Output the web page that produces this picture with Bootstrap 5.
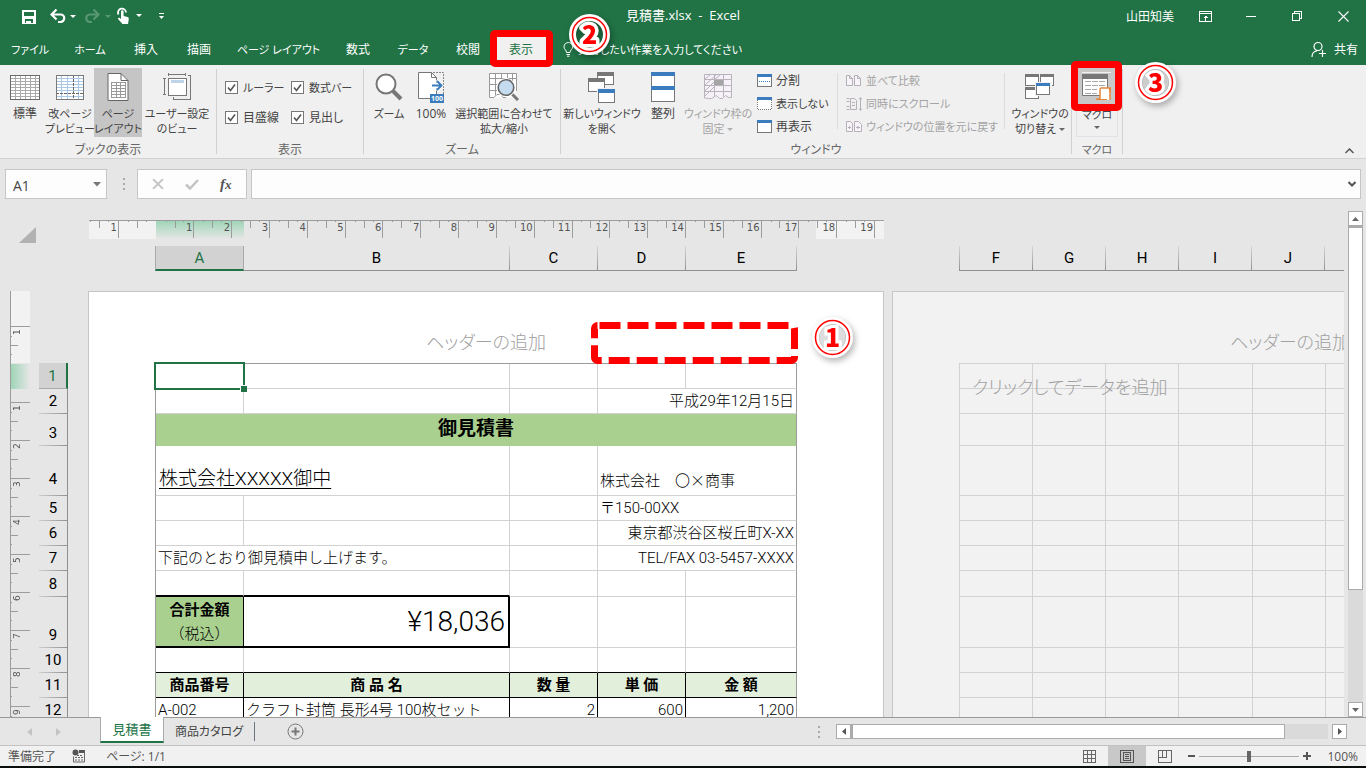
<!DOCTYPE html>
<html lang="ja">
<head>
<meta charset="utf-8">
<meta name="viewport" content="width=device-width, initial-scale=1">
<title>見積書.xlsx - Excel</title>
<link rel="stylesheet" href="https://cdn.jsdelivr.net/npm/bootstrap@5.3.0/dist/css/bootstrap.min.css">
<style>
:root{--xl:#217346;--ui:#f0f0f0;--bg:#e6e6e6;--ln:#d0d0d0}
html,body{height:100%}
body{font-family:"Open Sans","Noto Sans CJK JP",sans-serif;font-size:12px;line-height:15px;color:#333;background:var(--bg);font-feature-settings:"palt"}
button,input{font:inherit;color:inherit;font-feature-settings:inherit}
svg{display:block;flex:none}
.plain{border:0;background:none;padding:0}
.crisp{shape-rendering:crispEdges}
.f11{font-size:11px}
/* title and tabs */
.titlebar{height:32px}
.topband{background:var(--xl);color:#fff}
.titletext{top:8px;font-size:13px}
.tabrow{height:33px}
.rtab{height:33px;color:#fff;text-decoration:none;white-space:nowrap;padding-top:2px}
.rtab.on{background:var(--ui);color:var(--xl)}
.w52{width:52px}.w54{width:54px}.w56{width:56px}.w60{width:60px}.w105{width:105px}
.winbtn{width:46px;height:32px;display:grid;place-items:center}
.redbox{position:absolute;border:7px solid #f00;border-radius:5px;z-index:5;pointer-events:none}
.num{position:absolute;z-index:6;overflow:visible;filter:drop-shadow(2px 3px 3px rgba(0,0,0,.3))}
.num text{font:900 25px "Noto Sans CJK JP",sans-serif;text-anchor:middle}
/* ribbon */
.ribbon{height:94px;background:var(--ui);border-bottom:1px solid #d2d2d2;color:#444}
.grp{border-right:1px solid var(--ln);margin:4px 0}
.grp .cap{height:15px;text-align:center;color:#666}
.grp .tools{height:70px;margin-bottom:3px}
.rb{height:69px;margin-top:-1px;white-space:nowrap;display:flex;flex-direction:column;align-items:center;line-height:15px;flex:none}
.rb .ic{height:38px;display:flex;align-items:center}
.rb.on{background:#c5c5c5}
.dim{color:#a3a3a3}
.b40{width:40px}.b42{width:42px}.b48{width:48px}.b62{width:62px}.b70{width:70px}.b82{width:82px}.b104{width:104px}
.sm{height:23px;white-space:nowrap;display:flex;align-items:center;gap:4px}
.list1{width:84px}.list2{width:166px}
.vsep{width:1px;background:#dcdcdc;margin:4px 0 10px}
.xchk{appearance:none;width:13px;height:13px;border:1px solid #777;background:#fff;margin:0 1px 0 0;flex:none}
.xchk:checked{background:#fff url("data:image/svg+xml,%3Csvg xmlns='http://www.w3.org/2000/svg' viewBox='0 0 11 11'%3E%3Cpath d='M2 5.5l2.5 3L9 2.5' fill='none' stroke='%23555' stroke-width='1.6'/%3E%3C/svg%3E")}
.grp .chkgrid{display:grid;grid-template-columns:66px 72px;align-content:start;row-gap:15px;padding:11px 0 0 8px}
/* formula bar */
.fbar{height:54px;padding:10px 5px 12px}
.fbox{background:#fdfdfd;border:1px solid #c6c6c6;border-radius:0}
.namebox{width:102px}
.namebox input{width:70px;font-size:14px;background:none;border:0;padding:3px 0 0 7px;color:#444}
.fbox input:focus{outline:0}
.fxbox{width:110px}
.fxi{font:italic 700 15px "Liberation Serif",serif;color:#555}
/* sheet */
.panes{font-family:Roboto,"Noto Sans CJK JP",sans-serif;font-size:15px;color:#000;font-feature-settings:normal}
.headpane{height:80px}
.corner{width:88px}
.hruler{width:795px;height:19px;margin:9px 0 7px 1px;border-top:1px solid #9c9c9c;
 background:linear-gradient(#9fd5b7,#e6e6e6) 67px 0/88px 100% no-repeat,linear-gradient(90deg,#f2f2f2 67px,transparent 67px 727px,#f2f2f2 727px)}
.hruler .cells{width:794px;margin-left:-8px;display:grid;grid-template-columns:repeat(21,1fr)}
.hruler span{height:17px;border-right:1px solid #9c9c9c;font:10px/14px "DejaVu Sans",sans-serif;color:#555;text-align:right;padding-right:1px;
 background:linear-gradient(#9c9c9c,#9c9c9c) 50% 0/1px 7px no-repeat,linear-gradient(#9c9c9c,#9c9c9c) 25% 0/1px 1px no-repeat,linear-gradient(#9c9c9c,#9c9c9c) 75% 0/1px 1px no-repeat}
.hruler .blank{border-color:transparent}
.pagew{width:796px;flex:none}
.colheads{height:25px;padding-left:67px}
.lone{margin-top:35px}
.ch{border-right:1px solid;border-bottom:1px solid #999;border-image:linear-gradient(#d8d8d8,#8f8f8f) 1;text-align:center;line-height:24px}
.ch:first-child{border-left:1px solid}
.ch.on{background:#d2d2d2;color:var(--xl);border-image:none;border-color:#aaa;border-bottom:2px solid var(--xl)}
.cA,.cC,.cD{width:88px}.cA1{width:89px}.cB{width:266px}.cE{width:111px}.cF{width:73px}.cF1{width:74px}
.vruler{width:20px;margin-left:10px;border-left:1px solid #9c9c9c;overflow:hidden;
 background:linear-gradient(90deg,#9fd5b7,#e6e6e6) 0 73px/100% 25px no-repeat,linear-gradient(#f2f2f2 72px,transparent 72px)}
.vruler .cells{margin-top:-3px}
.vruler span{display:block;height:38px;border-top:1px solid #9c9c9c;font:9px/12px "DejaVu Sans",sans-serif;color:#555;writing-mode:vertical-rl;
 background:linear-gradient(#9c9c9c,#9c9c9c) 0 50%/7px 1px no-repeat,linear-gradient(#9c9c9c,#9c9c9c) 0 25%/1px 1px no-repeat,linear-gradient(#9c9c9c,#9c9c9c) 0 75%/1px 1px no-repeat}
.vruler b{font-weight:400;display:block;transform:rotate(180deg);height:36px;text-align:end;padding-bottom:2px;margin-right:7px;width:12px}
.rowheads{width:29px;margin-left:9px;margin-right:20px;padding-top:72px}
.rh{display:flex;align-items:flex-end;justify-content:center;line-height:24px;border-right:1px solid #999;border-bottom:1px solid;border-image:linear-gradient(90deg,#d0d0d0,#8f8f8f) 1}
.rh.on{background:#d2d2d2;color:var(--xl);border-image:none;border-color:#aaa;border-right:2px solid var(--xl)}
.h25{height:25px}.h26{height:26px}.h32{height:32px}.h50{height:50px}.h51{height:51px}
.sheetpage{border:1px solid #c6c6c6;border-bottom:0;background:#fff;padding-left:66px}
.page2{background:#f2f2f2}
.phead{height:71px;margin-left:-66px;text-align:center;font-size:18px;line-height:102px;color:#a0a0a0;font-weight:300;font-feature-settings:"palt";overflow:hidden}
.grid{table-layout:fixed;border-collapse:separate;border-spacing:0;border:1px solid #9b9b9b;border-bottom:0;border-right:0;font-weight:300}
.grid td,.grid th{border-right:1px solid #d2d2d2;border-bottom:1px solid #d2d2d2;padding:0 2px 2px;line-height:20px;vertical-align:bottom;white-space:nowrap}
.g1{width:642px}
.g1 tr>:last-child{border-right-color:#9b9b9b}
.g2{width:440px;border-color:#d2d2d2}
.grid .co{font-family:"Noto Sans CJK JP",sans-serif;padding-bottom:5px}
.grid .ttl{background:#a9d08e;font-weight:700;font-size:19px;text-align:center;vertical-align:middle;line-height:24px;border-bottom-color:#a9d08e}
.grid .cust{font-size:19px;line-height:28px;text-decoration:underline;text-underline-offset:3px;text-decoration-thickness:1px;padding-left:3px}
.grid .k{border-bottom:2px solid #000}
.grid .total{border-right:2px solid #000;font-size:28px;line-height:44px;text-align:right;padding-right:3px}
.grid .lab{background:#a9d08e;text-align:center;border-right:1px solid #000;line-height:24px;font-weight:700;padding-bottom:0}
.grid .kb,.grid .hd,.grid .it{border-bottom-color:#000}
.grid .hd{background:#e2efda;font-weight:700;text-align:center;border-right-color:#000}
.grid .it{border-right-color:#000}
.sel::after{content:"";position:absolute;inset:-2px;border:2px solid var(--xl)}
.sel::before{content:"";position:absolute;right:-4px;bottom:-4px;width:7px;height:7px;background:var(--xl);border:solid #fff;border-width:1px 0 0 1px;z-index:2}
.dashed{position:absolute;right:85px;top:30px;width:207px;height:42px;z-index:4;pointer-events:none}
.hint{position:absolute;left:79px;top:84px;font-size:18px;line-height:24px;color:#a0a0a0;font-weight:300;font-feature-settings:"palt"}
.vscroll{width:16px;margin:0 2px 0 4px}
.sbtn{border:1px solid #ababab;background:#fff;display:flex;align-items:center;justify-content:center;padding:0;width:15px;height:15px;flex:none}
.vthumb{border:1px solid #ababab;border-top-width:2px;background:#fff;width:15px;flex:0 1 72%}
.strack{background:#dadada;width:15px;height:15px}
/* bottom */
.sheettabs{height:28px;border-top:1px solid #999}
.stab{height:26px;color:#444;white-space:nowrap}
.stab.on{background:#fff;color:var(--xl);border:solid #ababab;border-width:0 1px 2px;border-bottom-color:var(--xl);width:64px;margin-top:-1px;font-size:13px}
.stab.off{width:90px}
.navs{width:100px;padding-left:27px;gap:24px}
.hscroll{width:38%;max-width:511px;margin-right:19px}
.hthumb{height:15px;border:1px solid #ababab;border-left-width:2px;background:#fff;flex:0 1 85%}
.statusbar{height:21px;background:#f1f1f1;color:#555;border-top:1px solid #c2c2c2}
.vbtn{width:38px;height:20px}
.vbtn.on{background:#c8c8c8}
.zoomr{appearance:none;width:100px;height:20px;background:linear-gradient(#aaa,#aaa) 0 50%/100% 1px no-repeat;margin:0}
.zoomr::-webkit-slider-thumb{appearance:none;width:4px;height:11px;background:#666}
.desk{height:2px;background:#0b0f0c}
</style>
</head>
<body class="d-flex flex-column overflow-hidden">
<header class="topband">
 <div class="titlebar d-flex align-items-center position-relative">
  <div class="d-flex align-items-center ps-3">
   <button class="plain ms-1" aria-label="保存"><svg width="18" height="16" viewBox="0 0 18 16"><path fill="#fff" fill-rule="evenodd" d="M2 2h14v14H2zM4 4v4h10V4zM5 11v4h1v-2h5v2h2v-4z"/></svg></button>
   <button class="plain ms-2 ps-1" aria-label="元に戻す"><svg width="27" height="16" viewBox="0 0 27 16"><path d="M1.500 6.500h9a3.500 3.500 0 0 1 0 7.500H8M6.500 1.500l-5 5 5 5" fill="none" stroke="#fff" stroke-width="2.200"/><path d="M20 7h6l-3 3z" fill="#fff"/></svg></button>
   <button class="plain ms-2" aria-label="やり直し"><svg width="27" height="16" viewBox="0 0 27 16"><g opacity=".25"><path d="M13 6.500H5a3.500 3.500 0 0 0 0 7.500h2M8.500 1.500l5 5-5 5" fill="none" stroke="#fff" stroke-width="2.200"/><path d="M20 7h6l-3 3z" fill="#fff"/></g></svg></button>
   <button class="plain ms-1" aria-label="タッチ/マウス モード"><svg width="26" height="18" viewBox="0 0 26 18"><path d="M2.500 7.500a4 4 0 1 1 7.500-2" fill="none" stroke="#fff" stroke-width="1.800"/><path fill="#fff" d="M5 4.500a1.300 1.300 0 0 1 2.600 0V9l4 1q1.400.5 1.200 2l-.8 5H6.500L2 12q0-1.500 1.500-1.200L5 12z"/><path d="M20 7h6l-3 3z" fill="#fff"/></svg></button>
   <button class="plain ms-3" aria-label="クイック アクセス ツール バーのカスタマイズ"><svg width="7" height="8" viewBox="0 0 7 8"><path d="M1 1.500h5" stroke="#fff"/><path d="M1 4h5L3.500 7z" fill="#fff"/></svg></button>
  </div>
  <div class="titletext position-absolute start-50 translate-middle-x">見積書.xlsx&nbsp; -&nbsp; Excel</div>
  <div class="ms-auto d-flex align-items-center">
   <span class="me-2">山田知美</span>
   <button class="plain winbtn" aria-label="リボンの表示オプション"><svg class="crisp" width="13" height="11" viewBox="0 0 13 11"><path d="M.5.5h12v10H.5zM.5 2.500h12M6.500 4.500v5M4.500 6.500h4M5.500 5.500h2" fill="none" stroke="#fff"/></svg></button>
   <button class="plain winbtn" aria-label="最小化"><svg class="crisp" width="10" height="10"><path d="M0 5.500h10" stroke="#fff"/></svg></button>
   <button class="plain winbtn" aria-label="元に戻す (縮小)"><svg class="crisp" width="10" height="10"><path d="M.5 2.500h7v7h-7zM2.500 2V.5h7v7H8" fill="none" stroke="#fff"/></svg></button>
   <button class="plain winbtn" aria-label="閉じる"><svg width="11" height="11"><path d="M.5.500l10 10M10.500.500l-10 10" stroke="#fff" stroke-width="1.100"/></svg></button>
  </div>
 </div>
 <nav class="tabrow d-flex align-items-center">
  <a href="#" class="rtab w60 d-flex align-items-center justify-content-center f11">ファイル</a>
  <a href="#" class="rtab w60 d-flex align-items-center justify-content-center f11">ホーム</a>
  <a href="#" class="rtab w52 d-flex align-items-center justify-content-center">挿入</a>
  <a href="#" class="rtab w54 d-flex align-items-center justify-content-center">描画</a>
  <a href="#" class="rtab w105 d-flex align-items-center justify-content-center f11">ページ レイアウト</a>
  <a href="#" class="rtab w54 d-flex align-items-center justify-content-center">数式</a>
  <a href="#" class="rtab w56 d-flex align-items-center justify-content-center f11">データ</a>
  <a href="#" class="rtab w54 d-flex align-items-center justify-content-center">校閲</a>
  <a href="#" class="rtab on w52 d-flex align-items-center justify-content-center position-relative">表示
   <span class="redbox" style="inset:-2px -6px -2px -5px"></span>
  </a>
  <a href="#" class="rtab d-flex align-items-center ps-3 position-relative f11"><svg class="me-1" width="11" height="15" viewBox="0 0 11 15"><path d="M3.500 10.500C3.500 8 1 7.500 1 4.800a4.300 4.300 0 0 1 8.600 0C9.600 7.500 7 8 7 10.500zM3.500 12.500H7M4 14.200h2.500" fill="none" stroke="#fff"/></svg>実行したい作業を入力してください
   <svg class="num" style="left:22px;top:-18px" width="41" height="41" viewBox="0 0 41 41"><g fill="none" stroke="#fff" stroke-width="7" stroke-linejoin="round"><circle cx="20.500" cy="20.500" r="17"/><text x="20.500" y="30">2</text></g><circle cx="20.500" cy="20.500" r="17" fill="none" stroke="#f00" stroke-width="1.500"/><text x="20.500" y="30" fill="#f00">2</text></svg>
  </a>
  <a href="#" class="rtab ms-auto me-2 d-flex align-items-center gap-2"><svg width="15" height="17" viewBox="0 0 15 17"><path d="M1 16q0-5.500 5-6M7 1.500a4 4 0 1 1 0 8 4 4 0 0 1 0-8M11.500 9v7M8 12.500h7" fill="none" stroke="#fff" stroke-width="1.200"/></svg>共有</a>
 </nav>
</header>

<section class="ribbon d-flex position-relative" aria-label="表示リボン">
 <div class="grp"><div class="tools d-flex ps-1 pe-1">
  <button class="plain rb b42"><span class="ic"><svg class="crisp" width="30" height="25" viewBox="0 0 30 25"><path fill="#fff" d="M0 0h30v25H0z"/><path d="M1 3.500h28M1 6.500h28M1 9.500h28M1 12.500h28M1 15.500h28M1 18.500h28M1 21.500h28M5.500 1v23M10.500 1v23M15.500 1v23M20.500 1v23M25.500 1v23" stroke="#aaa"/><path d="M.5.500h29v24H.5z" fill="none" stroke="#6a6a6a"/></svg></span>標準</button>
  <button class="plain rb b48 f11"><span class="ic"><svg class="crisp" width="28" height="25" viewBox="0 0 28 25"><path fill="#fff" d="M0 0h28v25H0z"/><path d="M1 3.500h26M1 6.500h26M1 9.500h26M1 12.500h26M1 15.500h26M1 21.500h26M5.500 1v23M11.500 1v23M22.500 1v23" stroke="#a9c8e8"/><path d="M17.500 0v25M0 18.500h28" stroke="#666" stroke-dasharray="3 1"/><path d="M.5.500h27v24H.5z" fill="none" stroke="#7a7a7a"/></svg></span>改ページ<span>プレビュー</span></button>
  <button class="plain rb b48 on f11"><span class="ic"><svg width="22" height="28" viewBox="0 0 22 28"><path d="M1 .5h13l7 7v20H1z" fill="#fff" stroke="#666"/><path d="M14 .5v7h7" fill="none" stroke="#666"/><path class="crisp" d="M4.500 9.500h14v15h-14zM4.500 12.500h14M4.500 15.500h14M4.500 18.500h14M4.500 21.500h14M9.500 9v16M13.500 9v16" fill="none" stroke="#999"/></svg></span>ページ<span>レイアウト</span></button>
  <button class="plain rb b70 f11"><span class="ic"><svg class="crisp" width="28" height="28" viewBox="0 0 28 28"><path d="M5.500 5.500h18v17h-18z" fill="#fff" stroke="#777"/><path d="M8 7h13v3H8z" fill="#bcd3ea"/><path d="M1.500 5v17M0 5.500h3M0 21.500h3M6 1.500h17M5.500 0v3M22.500 0v3M25 2.500h2.500v24h-17V24" fill="none" stroke="#777"/></svg></span>ユーザー設定<span>のビュー</span></button>
 </div><div class="cap">ブックの表示</div></div>

 <div class="grp"><div class="chkgrid tools">
  <label class="d-flex align-items-center gap-1"><input class="xchk" type="checkbox" checked><span class="f11">ルーラー</span></label>
  <label class="d-flex align-items-center gap-1"><input class="xchk" type="checkbox" checked><span class="f11">数式バー</span></label>
  <label class="d-flex align-items-center gap-1"><input class="xchk" type="checkbox" checked>目盛線</label>
  <label class="d-flex align-items-center gap-1"><input class="xchk" type="checkbox" checked>見出し</label>
 </div><div class="cap">表示</div></div>

 <div class="grp"><div class="tools d-flex px-1">
  <button class="plain rb b42 f11"><span class="ic"><svg width="28" height="28" viewBox="0 0 28 28"><path d="M18 18l8 8" stroke="#777" stroke-width="4"/><circle cx="11" cy="11" r="9.500" fill="#fff" stroke="#777" stroke-width="2"/></svg></span>ズーム</button>
  <button class="plain rb b42"><span class="ic"><svg width="26" height="31" viewBox="0 0 26 31"><path d="M.5.500h13l5 5v21H.5z" fill="#fff" stroke="#777"/><path d="M13.500.500v5h5" fill="none" stroke="#777"/><path d="M15 .5h10.500V23" fill="none" stroke="#888" stroke-dasharray="2 1"/><path d="M13 12h9v3h-9zM19 8l5 5.500-5 5.500" fill="none" stroke="#fff" stroke-width="3"/><path d="M14 13.500h9M19 9l4.500 4.500L19 18" fill="none" stroke="#3a7cbd" stroke-width="2"/><path d="M12 22h14v9H12z" fill="#3a7cbd"/><text x="19" y="29" fill="#fff" text-anchor="middle" font-size="7" font-weight="700">100</text></svg></span>100%</button>
  <button class="plain rb b104 f11"><span class="ic"><svg width="30" height="28" viewBox="0 0 30 28"><path d="M.5.500h27v18l-6 6H.5z" fill="#fff"/><path d="M27.500 18V.5H.5v24H5l3-3h4l2 3h3M.5 5.500h27M.5 11.500h10M.5 17.500h10M6.500.500v22M12.500.500v6M18.500.500v6M23.500.500v8" fill="none" stroke="#999"/><path d="M22 20l7 7" stroke="#777" stroke-width="3"/><circle cx="17" cy="14.500" r="7.500" fill="#d3e3f3" stroke="#fff" stroke-width="4"/><circle cx="17" cy="14.500" r="7.800" fill="#c5dbf0" stroke="#666" stroke-width="1.600"/></svg></span>選択範囲に合わせて<span>拡大/縮小</span></button>
 </div><div class="cap">ズーム</div></div>

 <div class="grp"><div class="tools d-flex">
  <button class="plain rb b82 f11"><span class="ic"><svg class="crisp" width="28" height="31" viewBox="0 0 28 31"><path d="M9.500.500h16v12h-16z" fill="#fff" stroke="#777"/><path d="M9 0h17v4H9z" fill="#777"/><path d="M.5 6.500h16v13H.5z" fill="#fff" stroke="#777"/><path d="M0 6h17v4H0z" fill="#777"/><path d="M9 16h19v15H9z" fill="#f0f0f0"/><path d="M10.500 17.500h16v13h-16z" fill="#fff" stroke="#777"/><path d="M10 17h17v4H10z" fill="#3a7cbd"/></svg></span>新しいウィンドウ<span>を開く</span></button>
  <button class="plain rb b40"><span class="ic"><svg class="crisp" width="24" height="30" viewBox="0 0 24 30"><path d="M.5.500h23v29H.5z" fill="#fff" stroke="#777"/><path d="M0 0h24v4H0zM0 14h24v4H0z" fill="#3a7cbd"/></svg></span>整列</button>
  <button class="plain rb b70 dim f11"><span class="ic"><svg width="28" height="26" viewBox="0 0 28 26"><path d="M.5.500h27v23h-3l-3-2-3 3h-3l-3-3-5 3h-3l-3-1z" fill="#f6f1f8"/><path d="M.5 24V.5h27v23h-3l-3-2-3 3h-3l-3-3-5 3h-3zM.5 5.500h27M.5 11.500h27M.5 17.500h27M10.500.500v22M19.500.500v22M1 5l5-4M1 11L12 1M1 17L12 6M1 22l10-10M11 5l5-4" fill="none" stroke="#b9b3bc"/><path d="M10 6h9v5h-9z" fill="#a5a5a5"/></svg></span>ウィンドウ枠の<span>固定 <svg class="d-inline-block" width="6" height="8"><path d="M0 2h6L3 5z" fill="#b0b0b0"/></svg></span></button>
  <div class="list1 ps-1">
   <button class="plain sm"><svg class="crisp" width="15" height="13"><path d="M.5.500h14v12H.5z" fill="#fff" stroke="#777"/><path d="M0 0h15v3H0z" fill="#3a7cbd"/><path d="M2 7.500h11" stroke="#3a7cbd" stroke-dasharray="1 1"/></svg>分割</button>
   <button class="plain sm"><svg class="crisp" width="15" height="13"><path d="M0 0h15v13H0z" fill="#fff"/><path d="M.5 3v9.500h14V3" fill="none" stroke="#777" stroke-dasharray="1 1"/><path d="M0 0h15v3H0z" fill="#3a7cbd"/></svg><span class="f11">表示しない</span></button>
   <button class="plain sm"><svg class="crisp" width="15" height="13"><path d="M.5.500h14v12H.5z" fill="#fff" stroke="#777"/><path d="M0 0h15v3H0z" fill="#3a7cbd"/></svg>再表示</button>
  </div>
  <div class="vsep"></div>
  <div class="list2 ps-2 dim f11">
   <button class="plain sm"><svg width="16" height="12" viewBox="0 0 16 12"><path d="M.5.500h3l3 3v7h-6zM8.500.500h3l3 3v7h-6zM3.500.500v3h3M11.500.500v3h3" fill="#f8f4fa" stroke="#b5b0b8"/></svg>並べて比較</button>
   <button class="plain sm"><svg width="16" height="14" viewBox="0 0 16 14"><path d="M.5 1.500h3M.5 12.500h3M.5 4.500h3M.5 9.500h3M4.500 1.500h4l2 2v9h-6zM6 5.500h3M6 8.500h3M14.500 1v12M13 2.500l1.500-2 1.500 2M13 11.500l1.500 2 1.500-2" fill="none" stroke="#b5b0b8"/></svg>同時にスクロール</button>
   <button class="plain sm"><svg width="16" height="12" viewBox="0 0 16 12"><path d="M.5.500h4l2 2v8h-6zM8.500.500h4l3 3v7h-7zM2 6.500h3M3.500 5v3M10 6.500h4M12 5v3" fill="#f8f4fa" stroke="#b5b0b8"/></svg>ウィンドウの位置を元に戻す</button>
  </div>
  <div class="vsep"></div>
  <button class="plain rb b62 f11 ms-1"><span class="ic"><svg class="crisp" width="30" height="26" viewBox="0 0 30 26"><path d="M.5.500h13v11H.5zM15.500.500h13v11h-13zM.5 13.500h13v11H.5z" fill="#fff" stroke="#777"/><path d="M0 0h14v3H0zM15 0h14v3H15zM0 13h14v3H0z" fill="#777"/><path d="M10 8h17v14H10z" fill="#f0f0f0"/><path d="M11.500 9.500h13v11h-13z" fill="#fff" stroke="#777"/><path d="M11 9h14v3H11z" fill="#3a7cbd"/></svg></span>ウィンドウの<span>切り替え <svg class="d-inline-block" width="6" height="8"><path d="M0 2h6L3 5z" fill="#666"/></svg></span></button>
 </div><div class="cap">ウィンドウ</div></div>

 <div class="grp position-relative px-1"><div class="tools d-flex">
  <button class="plain rb b42 f11 border"><span class="ic"><svg width="32" height="30" viewBox="0 0 32 30"><path d="M0 0h32v30H0z" fill="#c8c8c8"/><path d="M1.500 1.500h25v21h-25z" fill="#fff" stroke="#777"/><path d="M1 1h26v5H1z" fill="#777"/><path d="M4 8.500h20M4 12.500h20M4 16.500h12M4 20.500h12" stroke="#aaa" stroke-dasharray="6 1"/><path d="M20 15h10q1.500 0 1.500 3H29v9q0 2-2 2H18q-2 0-2-3h3V17q0-2 1-2z" fill="#fff" stroke="#e8853a" stroke-width="1.500"/><path d="M16 26h10v3h-8q-2 0-2-3zM28 15h2q2 0 1.500 3H28z" fill="#e8853a"/></svg></span>マクロ<svg class="mt-1" width="6" height="4"><path d="M0 0h6L3 3z" fill="#666"/></svg></button>
 </div><div class="cap f11">マクロ</div>
  <span class="redbox" style="left:-1px;top:-8px;width:51px;height:50px;box-shadow:inset 0 0 0 4px #c8c8c8"></span>
  <svg class="num" style="left:63px;top:-7px" width="41" height="41" viewBox="0 0 41 41"><g fill="none" stroke="#fff" stroke-width="7" stroke-linejoin="round"><circle cx="20.500" cy="20.500" r="17"/></g><circle cx="20.500" cy="20.500" r="13" fill="#ccc"/><text x="20.500" y="30" stroke="#fff" stroke-width="6">3</text><circle cx="20.500" cy="20.500" r="17" fill="none" stroke="#f00" stroke-width="1.500"/><text x="20.500" y="30" fill="#f00">3</text></svg>
 </div>
 <button class="plain ms-auto align-self-end me-2 mb-1" aria-label="リボンを折りたたむ"><svg class="me-1" width="9" height="6"><path d="M.5 5l4-4 4 4" fill="none" stroke="#555" stroke-width="1.500"/></svg></button>
</section>

<section class="fbar d-flex" aria-label="数式バー">
 <div class="fbox namebox d-flex align-items-center justify-content-between"><input aria-label="名前ボックス" value="A1"><svg class="me-1" width="9" height="5"><path d="M0 0h8L4 4.500z" fill="#777"/></svg></div>
 <svg class="align-self-center ms-3 me-2" width="2" height="12"><path d="M0 0v12" stroke="#aaa" stroke-width="4" stroke-dasharray="2 3"/></svg>
 <div class="fbox fxbox d-flex align-items-center justify-content-around px-1 ms-1">
  <button class="plain" aria-label="キャンセル"><svg width="12" height="10"><path d="M1 0l10 10M11 0L1 10" stroke="#c4c4c4" stroke-width="1.800"/></svg></button>
  <button class="plain" aria-label="入力"><svg width="14" height="11"><path d="M1 5.500l4 4L13 1" fill="none" stroke="#c4c4c4" stroke-width="2.500"/></svg></button>
  <button class="plain fxi" aria-label="関数の挿入">f<small>x</small></button>
 </div>
 <div class="fbox flex-grow-1 d-flex align-items-center ms-1 pe-1"><input class="plain flex-grow-1" aria-label="数式"><svg width="8" height="6"><path d="M.5 1l3.500 3.500L7.500 1" fill="none" stroke="#555" stroke-width="2"/></svg></div>
</section>

<main class="d-flex flex-grow-1 overflow-hidden">
 <div class="panes flex-grow-1 d-flex flex-column overflow-hidden">
  <div class="headpane d-flex flex-shrink-0">
   <div class="corner flex-shrink-0"><svg class="ms-3 mt-3" width="21" height="16"><path d="M20 0v16H3z" fill="#b2b2b2"/></svg></div>
   <div class="pagew overflow-hidden">
    <div class="hruler"><div class="cells"><span>1</span><span class="blank"></span><span>1</span><span>2</span><span>3</span><span>4</span><span>5</span><span>6</span><span>7</span><span>8</span><span>9</span><span>10</span><span>11</span><span>12</span><span>13</span><span>14</span><span>15</span><span>16</span><span>17</span><span>18</span><span>19</span></div></div>
    <div class="colheads d-flex"><div class="ch on cA1">A</div><div class="ch cB">B</div><div class="ch cC">C</div><div class="ch cD">D</div><div class="ch cE">E</div></div>
   </div>
   <div class="pagew ms-2"><div class="colheads lone d-flex"><div class="ch cF1">F</div><div class="ch cF">G</div><div class="ch cF">H</div><div class="ch cF">I</div><div class="ch cF">J</div><div class="ch cF"></div></div></div>
  </div>
  <div class="d-flex flex-grow-1 overflow-hidden">
   <div class="vruler flex-shrink-0"><div class="cells"><span></span><span><b>1</b></span><span></span><span><b>1</b></span><span><b>2</b></span><span><b>3</b></span><span><b>4</b></span><span><b>5</b></span><span><b>6</b></span><span><b>7</b></span><span><b>8</b></span><span><b>9</b></span></div></div>
   <div class="rowheads flex-shrink-0">
    <div class="rh on h26">1</div><div class="rh h25">2</div><div class="rh h32">3</div><div class="rh h50 pb-1">4</div><div class="rh h25">5</div><div class="rh h25">6</div><div class="rh h25">7</div><div class="rh h26">8</div><div class="rh h51">9</div><div class="rh h25">10</div><div class="rh h25">11</div><div class="rh h25">12</div>
   </div>
   <div class="pagew sheetpage position-relative">
    <div class="phead">ヘッダーの追加</div>
    <table class="grid g1">
     <colgroup><col class="cA"><col class="cB"><col class="cC"><col class="cD"><col class="cE"></colgroup>
     <tr class="h25"><td class="sel position-relative"></td><td></td><td></td><td></td><td></td></tr>
     <tr class="h25"><td></td><td></td><td></td><td colspan="2" class="text-end">平成29年12月15日</td></tr>
     <tr class="h32"><td colspan="5" class="ttl">御見積書</td></tr>
     <tr class="h50"><td colspan="2" class="cust">株式会社XXXXX御中</td><td></td><td colspan="2" class="co">株式会社　〇×商事</td></tr>
     <tr class="h25"><td></td><td></td><td></td><td colspan="2">〒150-00XX</td></tr>
     <tr class="h25"><td></td><td></td><td></td><td colspan="2" class="text-end">東京都渋谷区桜丘町X-XX</td></tr>
     <tr class="h25"><td colspan="2">下記のとおり御見積申し上げます。</td><td></td><td colspan="2" class="text-end">TEL/FAX 03-5457-XXXX</td></tr>
     <tr class="h26"><td class="k"></td><td class="k"></td><td></td><td></td><td></td></tr>
     <tr class="h51"><td class="k lab">合計金額<br><span class="fw-light">（税込）</span></td><td class="k total">¥18,036</td><td></td><td></td><td></td></tr>
     <tr class="h25"><td class="kb"></td><td class="kb"></td><td class="kb"></td><td class="kb"></td><td class="kb"></td></tr>
     <tr class="h25"><th class="hd">商品番号</th><th class="hd">商 品 名</th><th class="hd">数 量</th><th class="hd">単 価</th><th class="hd">金 額</th></tr>
     <tr class="h25"><td class="it">A-002</td><td class="it">クラフト封筒 長形4号 100枚セット</td><td class="it text-end">2</td><td class="it text-end">600</td><td class="it text-end">1,200</td></tr>
    </table>
    <svg class="dashed" viewBox="0 0 207 42"><rect x="3.500" y="3.500" width="200" height="35" rx="3" fill="none" stroke="#f00" stroke-width="7" stroke-dasharray="21 7" stroke-dashoffset="-2"/></svg>
    <svg class="num" style="right:30px;top:25px" width="41" height="41" viewBox="0 0 41 41"><g fill="none" stroke="#fff" stroke-width="7" stroke-linejoin="round"><circle cx="20.500" cy="20.500" r="17"/></g><circle cx="20.500" cy="20.500" r="13" fill="#ddd"/><text x="20.500" y="30" stroke="#fff" stroke-width="6">1</text><circle cx="20.500" cy="20.500" r="17" fill="none" stroke="#f00" stroke-width="1.500"/><text x="20.500" y="30" fill="#f00">1</text></svg>
   </div>
   <div class="pagew sheetpage page2 ms-2 position-relative">
    <div class="phead">ヘッダーの追加</div>
    <table class="grid g2" aria-label="次のページ">
     <colgroup><col class="cF"><col class="cF"><col class="cF"><col class="cF"><col class="cF"><col class="cF"></colgroup>
     <tr class="h25"><td></td><td></td><td></td><td></td><td></td><td></td></tr>
     <tr class="h25"><td></td><td></td><td></td><td></td><td></td><td></td></tr>
     <tr class="h32"><td></td><td></td><td></td><td></td><td></td><td></td></tr>
     <tr class="h50"><td></td><td></td><td></td><td></td><td></td><td></td></tr>
     <tr class="h25"><td></td><td></td><td></td><td></td><td></td><td></td></tr>
     <tr class="h25"><td></td><td></td><td></td><td></td><td></td><td></td></tr>
     <tr class="h25"><td></td><td></td><td></td><td></td><td></td><td></td></tr>
     <tr class="h26"><td></td><td></td><td></td><td></td><td></td><td></td></tr>
     <tr class="h51"><td></td><td></td><td></td><td></td><td></td><td></td></tr>
     <tr class="h25"><td></td><td></td><td></td><td></td><td></td><td></td></tr>
     <tr class="h25"><td></td><td></td><td></td><td></td><td></td><td></td></tr>
     <tr class="h25"><td></td><td></td><td></td><td></td><td></td><td></td></tr>
    </table>
    <div class="hint">クリックしてデータを追加</div>
   </div>
  </div>
 </div>
 <div class="vscroll d-flex flex-column flex-shrink-0">
  <button class="sbtn" aria-label="上へ"><svg width="7" height="4"><path d="M0 4h7L3.500 0z" fill="#666"/></svg></button>
  <div class="vthumb"></div><div class="strack flex-grow-1"></div>
  <button class="sbtn" aria-label="下へ"><svg width="7" height="4"><path d="M0 0h7L3.500 4z" fill="#666"/></svg></button>
 </div>
</main>

<footer class="flex-shrink-0">
 <div class="sheettabs d-flex">
  <div class="navs d-flex align-items-center"><button class="plain" aria-label="前のシート"><svg width="5" height="8"><path d="M5 0v8L0 4z" fill="#c4c4c4"/></svg></button><button class="plain" aria-label="次のシート"><svg width="5" height="8"><path d="M0 0v8l5-4z" fill="#c4c4c4"/></svg></button></div>
  <button class="plain stab on">見積書</button>
  <button class="plain stab off">商品カタログ</button>
  <span class="border-start border-secondary my-1"></span>
  <button class="plain ms-4 ps-2" aria-label="新しいシート"><svg width="17" height="17"><circle cx="8.500" cy="8.500" r="7.500" fill="none" stroke="#777"/><path d="M8.500 4.500v8M4.500 8.500h8" stroke="#777" stroke-width="2"/></svg></button>
  <svg class="ms-auto me-3 align-self-center" width="2" height="12"><path d="M1 0v12" stroke="#aaa" stroke-width="2" stroke-dasharray="2 3"/></svg>
  <div class="hscroll d-flex align-items-center"><button class="sbtn" aria-label="左へ"><svg width="4" height="7"><path d="M4 0v7L0 3.500z" fill="#555"/></svg></button><div class="hthumb"></div><div class="strack flex-grow-1"></div><button class="sbtn ms-1" aria-label="右へ"><svg width="4" height="7"><path d="M0 0v7l4-3.500z" fill="#555"/></svg></button></div>
 </div>
 <div class="statusbar d-flex align-items-center">
  <span class="ms-2">準備完了</span>
  <svg class="ms-3 me-3" width="14" height="14" viewBox="0 0 14 14"><circle cx="3.500" cy="3.500" r="3" fill="#555"/><path d="M7 1h6v3H7z" fill="#555"/><path d="M3 8.500h8M3 11h8M5 6.500h6" fill="none" stroke="#666" stroke-dasharray="2 1"/><path d="M1.500 7.500v5.500h11V2" fill="none" stroke="#666"/></svg>
  <span class="ms-1">ページ: 1/1</span>
  <div class="ms-auto d-flex align-items-center">
   <button class="plain vbtn d-flex align-items-center justify-content-center" aria-label="標準"><svg class="crisp" width="13" height="13"><path d="M.5.500h12v12H.5zM4.500 0v13M8.500 0v13M0 4.500h13M0 8.500h13" fill="none" stroke="#666"/></svg></button>
   <button class="plain vbtn on d-flex align-items-center justify-content-center" aria-label="ページ レイアウト"><svg class="crisp" width="14" height="13"><path d="M.5.500h13v12H.5zM3.500 2.500h7v8h-7zM5 4.500h4M5 6.500h4M5 8.500h4" fill="none" stroke="#555"/></svg></button>
   <button class="plain vbtn d-flex align-items-center justify-content-center" aria-label="改ページ プレビュー"><svg class="crisp" width="14" height="13"><path d="M.5.500h13v12H.5zM4.500 0v7M8.500 0v7.500H0" fill="none" stroke="#666"/></svg></button>
   <button class="plain ms-1 me-1" aria-label="縮小"><svg class="crisp" width="7" height="8"><path d="M0 4h7" stroke="#555" stroke-width="2"/></svg></button>
   <input class="zoomr" type="range" aria-label="ズーム" min="0" max="100" value="50">
   <button class="plain ms-1" aria-label="拡大"><svg class="crisp" width="8" height="8"><path d="M0 4h8M4 0v8" stroke="#555" stroke-width="2"/></svg></button>
   <span class="ms-3 me-2">100%</span>
  </div>
 </div>
 <div class="desk"></div>
</footer>
<script src="https://cdn.jsdelivr.net/npm/bootstrap@5.3.0/dist/js/bootstrap.bundle.min.js"></script>
</body>
</html>
